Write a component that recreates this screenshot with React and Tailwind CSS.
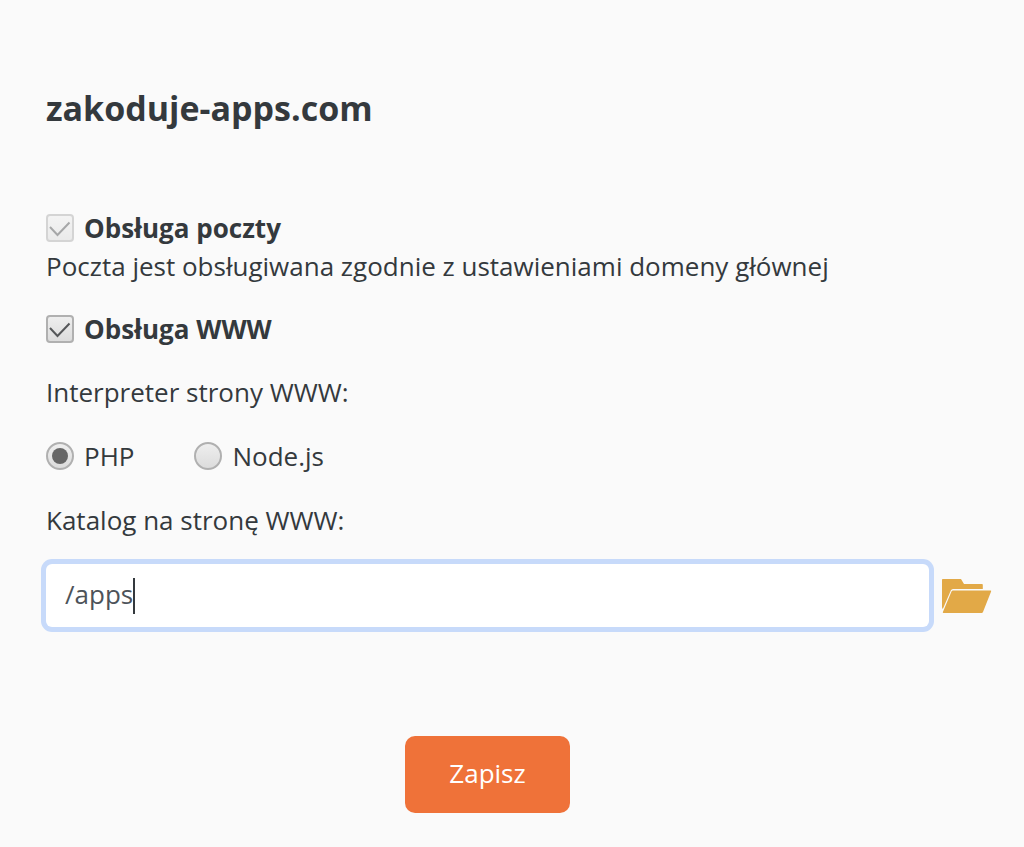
import { useState } from 'react'

function Checkbox({ id, label, checked, disabled, onChange }) {
  return (
    <div className="flex items-center gap-[10px]">
      <span className={`relative h-7 w-7 shrink-0 ${disabled ? 'opacity-50' : ''}`}>
        <input
          id={id}
          type="checkbox"
          checked={checked}
          disabled={disabled}
          onChange={onChange}
          className="block h-7 w-7 appearance-none rounded-[4px] border-2 border-[#b0b0b0] bg-linear-to-b from-[#eeeeee] to-[#dcdcdc] outline-none"
        />
        {checked && (
          <svg
            viewBox="0 0 28 28"
            className="pointer-events-none absolute inset-0 h-7 w-7"
            fill="none"
            stroke="#555759"
            strokeWidth="2"
          >
            <path d="M4 13 11.500 21 23.500 8.500" />
          </svg>
        )}
      </span>
      <label htmlFor={id} className="font-bold">{label}</label>
    </div>
  )
}

function Radio({ id, name, label, checked, onChange }) {
  return (
    <div className="flex items-center gap-[10px]">
      <span className="relative h-7 w-7 shrink-0">
        <input
          id={id}
          type="radio"
          name={name}
          checked={checked}
          onChange={onChange}
          className="block h-7 w-7 appearance-none rounded-full border-2 border-[#b0b0b0] bg-linear-to-b from-[#eeeeee] to-[#dcdcdc] outline-none"
        />
        {checked && (
          <span className="pointer-events-none absolute inset-[6px] rounded-full bg-[#666666]" />
        )}
      </span>
      <label htmlFor={id}>{label}</label>
    </div>
  )
}

function FolderIcon() {
  return (
    <svg viewBox="0 0 50 34" className="h-[34px] w-[50px]" fill="#e2a947">
      <path d="M.8 0H19l3 5h18q.8 0 .8.8V10H11q-1.500 0-2.200 1.500L.8 30q-.8-1-.8-2V.8Q0 0 .8 0Z" />
      <path d="M11 11.500h37.500q1 0 .6 1L41 33q-.4 1-1.400 1H1.500q-1 0-.6-1l8.600-20.500q.4-1 1.500-1Z" />
    </svg>
  )
}

export default function App() {
  const [www, setWww] = useState(true)
  const [interpreter, setInterpreter] = useState('php')
  const [directory, setDirectory] = useState('/apps')

  return (
    <main className="min-h-screen bg-[#fafafa] pt-[84px] pr-8 pb-8 pl-[46px] font-['Open_Sans',sans-serif] text-[26px] leading-[38px] text-[#34393d]">
      <h1 className="text-[34px] leading-[48px] font-bold">zakoduje-apps.com</h1>

      <form onSubmit={(e) => e.preventDefault()} className="mt-[77px] flex flex-col gap-[25px]">
        <div>
          <Checkbox id="mail" label="Obsługa poczty" checked disabled />
          <p>Poczta jest obsługiwana zgodnie z ustawieniami domeny głównej</p>
        </div>

        <Checkbox
          id="www"
          label="Obsługa WWW"
          checked={www}
          onChange={(e) => setWww(e.target.checked)}
        />

        <p id="interpreter">Interpreter strony WWW:</p>
        <div role="radiogroup" aria-labelledby="interpreter" className="flex gap-[60px] py-px">
          <Radio
            id="php"
            name="interpreter"
            label="PHP"
            checked={interpreter === 'php'}
            onChange={() => setInterpreter('php')}
          />
          <Radio
            id="node"
            name="interpreter"
            label="Node.js"
            checked={interpreter === 'node'}
            onChange={() => setInterpreter('node')}
          />
        </div>

        <label htmlFor="directory">Katalog na stronę WWW:</label>
        <div className="grid grid-cols-[1fr_50px] items-center gap-x-[13px]">
          <div className="relative">
            <input
              id="directory"
              type="text"
              autoFocus
              value={directory}
              onChange={(e) => setDirectory(e.target.value)}
              className="block h-[63px] w-full rounded-[6px] bg-white px-[19px] pb-1 text-[#4d5359] caret-transparent outline-none ring-[5px] ring-[#c7dafa]"
            />
            {/* text cursor, kept at the end of the value */}
            <span
              aria-hidden="true"
              className="pointer-events-none absolute inset-y-0 left-[19px] flex items-center"
            >
              <span className="invisible whitespace-pre">{directory}</span>
              <span className="h-9 w-[2px] bg-[#34393d]" />
            </span>
          </div>
          <button type="button" aria-label="Wybierz katalog">
            <FolderIcon />
          </button>
          <button
            type="submit"
            className="mt-[109px] h-[77px] justify-self-center rounded-[10px] bg-[#ef7239] px-[44px] pb-1 font-medium text-white"
          >
            Zapisz
          </button>
        </div>
      </form>
    </main>
  )
}
